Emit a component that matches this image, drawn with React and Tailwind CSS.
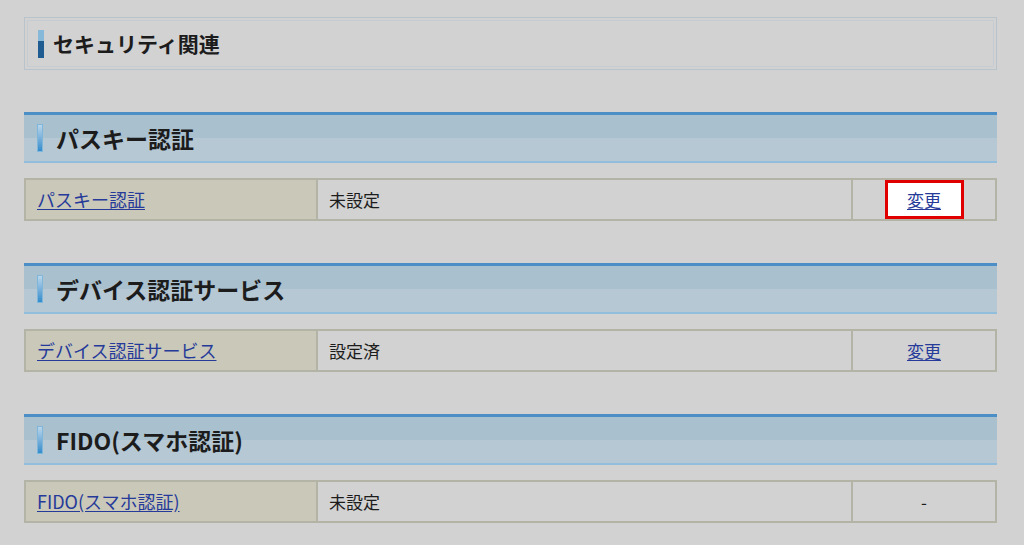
const sections = [
  { title: 'パスキー認証', label: 'パスキー認証', value: '未設定', action: '変更', highlight: true },
  { title: 'デバイス認証サービス', label: 'デバイス認証サービス', value: '設定済', action: '変更' },
  { title: 'FIDO(スマホ認証)', label: 'FIDO(スマホ認証)', value: '未設定', action: '-' },
];

const font = { fontFamily: '"Noto Sans CJK JP", "Noto Sans", sans-serif' };

const Bar = ({ dark }) => (
  <span
    className={
      dark
        ? 'block w-[6px] h-[28px] bg-gradient-to-b from-[#86b8da] from-40% to-[#1f5c92] to-40%'
        : 'block w-[6px] h-[28px] border border-[#7fb6da] bg-gradient-to-b from-[#b9d6ea] to-[#2f8ccc]'
    }
  />
);

const SectionHeader = ({ title }) => (
  <div className="border-t-[3px] border-[#4c8fc6] border-b-2 border-b-[#93bedb] bg-gradient-to-b from-[#a9c0cf] from-50% to-[#b6c8d4] to-50% h-[51px] flex items-center pl-[13px] gap-[13px]">
    <Bar />
    <h2 className="text-[23px] font-bold text-[#1c1c1c] leading-none">{title}</h2>
  </div>
);

const Row = ({ label, value, action, highlight }) => (
  <div className="mt-[15px] grid grid-cols-[292px_535px_1fr] h-[43px] border-2 border-[#b4b4a6] text-[17px]">
    <div className="bg-[#c9c8b9] border-r-2 border-[#b4b4a6] flex items-center pl-[11px]">
      <a href="#" className="text-[18px] text-[#263a9a] underline underline-offset-2">{label}</a>
    </div>
    <div className="border-r-2 border-[#b4b4a6] flex items-center pl-[11px] text-[#1c1c1c]">{value}</div>
    <div className="flex items-center justify-center">
      {action === '-' ? (
        <span className="text-[#1c1c1c]">-</span>
      ) : highlight ? (
        <span className="w-[79px] h-[39px] border-[3px] border-[#e00000] bg-white flex items-center justify-center">
          <a href="#" className="text-[#263a9a] underline underline-offset-2">{action}</a>
        </span>
      ) : (
        <a href="#" className="text-[#263a9a] underline underline-offset-2">{action}</a>
      )}
    </div>
  </div>
);

export default function App() {
  return (
    <div className="min-h-[545px] w-[1024px] bg-[#d2d2d2] pt-[17px] pl-[24px] pr-[27px]" style={font}>
      <div className="border border-[#b9c3cc] p-[2px] h-[53px]">
        <div className="border border-[#c6ccd2] h-full flex items-center pl-[10px] gap-[9px]">
          <Bar dark />
          <h1 className="text-[21px] font-bold text-[#1c1c1c] leading-none">セキュリティ関連</h1>
        </div>
      </div>
      {sections.map((s, i) => (
        <div key={i} className="mt-[42px]">
          <SectionHeader title={s.title} />
          <Row {...s} />
        </div>
      ))}
    </div>
  );
}
